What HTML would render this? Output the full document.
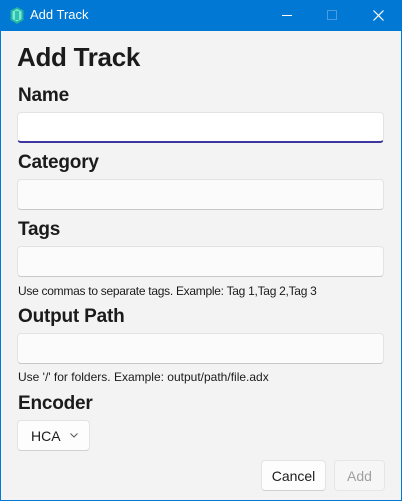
<!DOCTYPE html>
<html><head><style>
*{margin:0;padding:0;box-sizing:border-box}
body{width:402px;height:501px;background:#0078d4;font-family:"Segoe UI","Liberation Sans",sans-serif;position:relative;overflow:hidden}
.win{position:absolute;left:1px;top:31px;width:400px;height:469px;background:#f3f3f3}
.t{position:absolute;color:#1b1b1b;white-space:nowrap}
.l{font-size:19px;font-weight:600;letter-spacing:-0.2px}
.inp{position:absolute;left:17px;width:367px;height:31px;background:#fbfbfb;border:1px solid #e3e3e3;border-bottom-color:#c8c8c8;border-radius:4px}
.btn{position:absolute;height:31px;background:#fdfdfd;border:1px solid #e3e3e3;border-bottom-color:#d0d0d0;border-radius:4px;font-size:14px;display:flex;align-items:center;justify-content:center;color:#1b1b1b}
</style></head><body>
<svg style="position:absolute;left:10px;top:7px" width="14" height="17" viewBox="0 0 14 17"><path d="M7 0L13.5 3.5V13L7 17L0.5 13V3.5Z" fill="#1fb5a0"/><path d="M7 2L11.5 4.5V12L7 14.5L2.5 12V4.5Z" fill="#7fe7d6"/><rect x="5" y="4" width="4" height="9" fill="#2cc4ae"/></svg>
<div class="t" style="left:30px;top:7px;color:#fff;font-size:13px">Add Track</div>
<div style="position:absolute;left:282px;top:15px;width:10px;height:1px;background:#fff"></div>
<div style="position:absolute;left:327px;top:10px;width:10px;height:10px;border:1px solid #4a9be0"></div>
<svg style="position:absolute;left:373px;top:10px" width="11" height="11"><path d="M0.5 0.5L10.5 10.5M10.5 0.5L0.5 10.5" stroke="#fff" stroke-width="1.2"/></svg>
<div class="win"></div>
<div class="t" style="left:17px;top:42px;font-size:26px;font-weight:600;letter-spacing:-0.3px">Add Track</div>
<div class="t l" style="left:18px;top:85px">Name</div>
<div class="inp" style="top:112px;background:#fff;border-bottom:2px solid #3d35a0"></div>
<div class="t l" style="left:18px;top:152px">Category</div>
<div class="inp" style="top:179px"></div>
<div class="t l" style="left:18px;top:219px">Tags</div>
<div class="inp" style="top:246px"></div>
<div class="t" style="left:18px;top:284px;font-size:12px;letter-spacing:-0.28px">Use commas to separate tags. Example: Tag 1,Tag 2,Tag 3</div>
<div class="t l" style="left:18px;top:306px">Output Path</div>
<div class="inp" style="top:333px"></div>
<div class="t" style="left:18px;top:370px;font-size:12px">Use '/' for folders. Example: output/path/file.adx</div>
<div class="t l" style="left:18px;top:393px">Encoder</div>
<div class="btn" style="left:17px;top:420px;width:73px;justify-content:flex-start;padding-left:13px">HCA<svg style="margin-left:9px" width="8" height="5"><path d="M0.5 0.5L4 4L7.5 0.5" stroke="#555" fill="none"/></svg></div>
<div class="btn" style="left:261px;top:460px;width:65px">Cancel</div>
<div class="btn" style="left:334px;top:460px;width:51px;background:#f6f6f6;color:#a0a0a0;border-color:#e6e6e6">Add</div>
</body></html>
